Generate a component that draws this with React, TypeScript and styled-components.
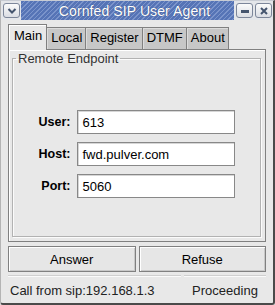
import { Fragment } from 'react';
import styled, { createGlobalStyle } from 'styled-components';

// ========== GLOBAL ==========

const GlobalStyle = createGlobalStyle`
  html, body {
    margin: 0;
    padding: 0;
    background: #e8e8e8;
  }
  body {
    font-family: "Liberation Sans", Arial, sans-serif;
  }
`;

// ========== ICONS ==========

const Icons = {
  Menu: () => (
    <svg width="10" height="8" viewBox="0 0 10 8" fill="none" stroke="#44546e" strokeWidth="2">
      <path d="M1.5 2l3.5 3.5L8.5 2" />
    </svg>
  ),
  Minimize: () => (
    <svg width="10" height="10" viewBox="0 0 10 10">
      <rect x="1" y="4" width="8" height="3" fill="#44546e" />
    </svg>
  ),
  Close: () => (
    <svg width="10" height="10" viewBox="0 0 10 10" fill="none" stroke="#44546e" strokeWidth="2">
      <path d="M2 2l6 6M8 2l-6 6" />
    </svg>
  ),
};

// ========== STYLES ==========

const Window = styled.div`
  width: 275px;
  height: 305px;
  box-sizing: border-box;
  display: flex;
  flex-direction: column;
  background: #e8e8e8;
  border-left: 1px solid #b4b4b4;
  border-top: 1px solid #c8ccd4;
  border-right: 2px solid #4a4a4a;
  border-bottom: 2px solid #4a4a4a;
  border-radius: 0 0 3px 3px;
  font-family: "Liberation Sans", Arial, sans-serif;
  font-size: 13px;
  color: #000;
  overflow: hidden;
`;

const TitleBar = styled.div`
  height: 19px;
  display: flex;
  align-items: stretch;
  padding: 0 1px 0 2px;
  background: #e4e6ea;
  flex-shrink: 0;
`;

const WinButton = styled.div`
  width: 17px;
  height: 15px;
  margin-top: 2px;
  box-sizing: border-box;
  border: 1px solid #7c869a;
  border-radius: 3px;
  background: linear-gradient(#fbfbfb, #dadde4);
  display: flex;
  align-items: center;
  justify-content: center;
`;

const TitleStripe = styled.div`
  flex: 1;
  margin: 0 1px 0 1px;
  display: flex;
  align-items: center;
  justify-content: center;
  padding-left: 14px;
  background: repeating-linear-gradient(
    135deg,
    #5674b6 0px,
    #5674b6 2.2px,
    #7b94cb 2.2px,
    #7b94cb 3.2px
  );
  color: #fff;
  font-size: 14px;
  letter-spacing: 0.1px;
  text-shadow: 0 0 1px #2c3e66;
`;

const RightButtons = styled.div`
  display: flex;
  gap: 2px;
  padding-left: 1px;
`;

const Body = styled.div`
  flex: 1;
  display: flex;
  flex-direction: column;
  padding: 4px 7px 0 7px;
`;

const TabRow = styled.div`
  display: flex;
  align-items: flex-end;
  height: 26px;
  margin-bottom: -1px;
  position: relative;
  z-index: 1;
`;

const Tab = styled.div<{ $active?: boolean }>`
  box-sizing: border-box;
  height: ${p => (p.$active ? '26px' : '22px')};
  margin-bottom: ${p => (p.$active ? '0' : '1px')};
  padding: ${p => (p.$active ? '3px 4px 0 5px' : '2px 3px 0 4px')};
  border: 1px solid #808080;
  border-bottom: none;
  margin-left: -1px;
  background: ${p => (p.$active ? '#e8e8e8' : '#c7c7c7')};
  box-shadow: inset 1px 1px 0 ${p => (p.$active ? '#ffffff' : '#dcdcdc')};
  display: flex;
  align-items: flex-start;
  white-space: nowrap;

  &:first-child {
    margin-left: 0;
  }
`;

const Panel = styled.div`
  height: 193px;
  box-sizing: border-box;
  border: 1px solid #808080;
  box-shadow: inset 1px 1px 0 #ffffff;
  padding: 1px 4px 4px 3px;
  display: flex;
`;

const Frame = styled.fieldset`
  flex: 1;
  margin: 0;
  padding: 0;
  border: 1px solid #b2b2b2;
  box-shadow: inset 1px 1px 0 #fbfbfb, 1px 1px 0 #fbfbfb;
  display: flex;
  align-items: center;
  justify-content: center;
  min-width: 0;
`;

const Legend = styled.legend`
  margin-left: 3px;
  padding: 0 2px;
  font-size: 13px;
  color: #333;
`;

const FieldGrid = styled.div`
  display: grid;
  grid-template-columns: auto 158px;
  column-gap: 7px;
  row-gap: 8px;
  align-items: center;
  margin-top: 6px;
  margin-left: 1px;
`;

const FieldLabel = styled.label`
  text-align: right;
  font-weight: bold;
  font-size: 12.5px;
`;

const Input = styled.input`
  box-sizing: border-box;
  height: 24px;
  width: 158px;
  margin: 0;
  padding: 0 4px;
  border: 1px solid #888;
  box-shadow: inset 1px 1px 0 #d6d6d6;
  background: #fff;
  font-family: "Liberation Sans", Arial, sans-serif;
  font-size: 13px;
  color: #000;
  outline: none;
`;

const ButtonRow = styled.div`
  display: grid;
  grid-template-columns: 1fr 1fr;
  gap: 3px;
  margin-top: 4px;
`;

const PushButton = styled.button`
  height: 26px;
  margin: 0;
  padding: 0;
  border: 1px solid #808080;
  box-shadow: inset 1px 1px 0 #fff, inset -1px -1px 0 #c8c8c8;
  background: #e6e6e6;
  font-family: "Liberation Sans", Arial, sans-serif;
  font-size: 13px;
  color: #000;
`;

const StatusBar = styled.div`
  display: grid;
  grid-template-columns: 173px 1fr;
  gap: 3px;
  margin-top: 3px;
`;

const StatusPane = styled.div<{ $center?: boolean }>`
  height: 24px;
  border-top: 1px solid #cfcfcf;
  box-shadow: inset 0 1px 0 #fafafa;
  display: flex;
  align-items: center;
  justify-content: ${p => (p.$center ? 'center' : 'flex-start')};
  padding: 2px 2px 0 2px;
  color: #222;
  white-space: nowrap;
`;

// ========== COMPONENT ==========

const TABS = ['Main', 'Local', 'Register', 'DTMF', 'About'];

const FIELDS = [
  { label: 'User:', value: '613' },
  { label: 'Host:', value: 'fwd.pulver.com' },
  { label: 'Port:', value: '5060' },
];

export default function App() {
  return (
    <>
      <GlobalStyle />
      <Window>
        <TitleBar>
          <WinButton>
            <Icons.Menu />
          </WinButton>
          <TitleStripe>Cornfed SIP User Agent</TitleStripe>
          <RightButtons>
            <WinButton>
              <Icons.Minimize />
            </WinButton>
            <WinButton>
              <Icons.Close />
            </WinButton>
          </RightButtons>
        </TitleBar>

        <Body>
          <TabRow>
            {TABS.map((t, i) => (
              <Tab key={t} $active={i === 0}>
                {t}
              </Tab>
            ))}
          </TabRow>

          <Panel>
            <Frame>
              <Legend>Remote Endpoint</Legend>
              <FieldGrid>
                {FIELDS.map(f => (
                  <Fragment key={f.label}>
                    <FieldLabel>{f.label}</FieldLabel>
                    <Input defaultValue={f.value} />
                  </Fragment>
                ))}
              </FieldGrid>
            </Frame>
          </Panel>

          <ButtonRow>
            <PushButton>Answer</PushButton>
            <PushButton>Refuse</PushButton>
          </ButtonRow>

          <StatusBar>
            <StatusPane>Call from sip:192.168.1.3</StatusPane>
            <StatusPane $center>Proceeding</StatusPane>
          </StatusBar>
        </Body>
      </Window>
    </>
  );
}
